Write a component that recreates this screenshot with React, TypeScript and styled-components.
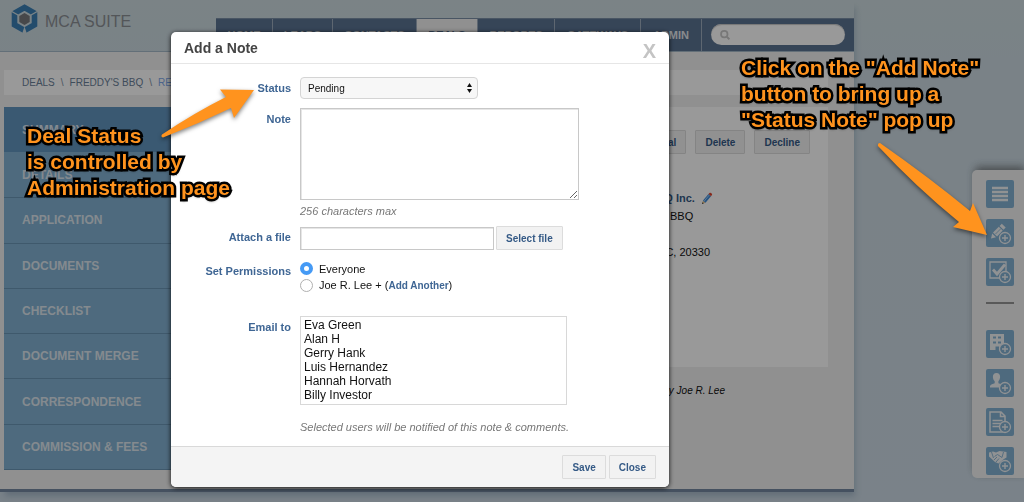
import React from "react";
import styled, { createGlobalStyle } from "styled-components";

const GlobalStyle = createGlobalStyle`
  * { box-sizing: border-box; }
  html { min-height: 100%; }
  body {
    margin: 0;
    min-height: 100vh;
    background: linear-gradient(180deg, #cddbdf 0, #cbd9e1 60px, #cbd9e4 100%);
    font-family: "Liberation Sans", Arial, Helvetica, sans-serif;
    font-size: 11px;
    line-height: 18px;
    color: #111;
    overflow: hidden;
  }
  button, input, select, textarea { font-family: inherit; }
  ul, ol { list-style: none; margin: 0; padding: 0; }
  p, h1, h2 { margin: 0; }
  a { text-decoration: none; }
`;

/* ---------- page behind the dialog ---------- */

const Shell = styled.div`
  margin-right: 170px;
  border-bottom: 3px solid #7488a0;
  box-shadow: 3px 6px 6px -2px rgba(80, 110, 140, 0.3);
`;

const Header = styled.header`
  display: flex;
  align-items: flex-end;
  justify-content: space-between;
  height: 52px;
  border-bottom: 1px solid #a5b9c8;
`;

const Brand = styled.a`
  display: flex;
  align-self: flex-start;
  align-items: flex-end;
  gap: 6px;
  padding: 4px 0 0 10px;
  color: #8b8f94;
  font-size: 16px;
  line-height: 24px;
`;

const Nav = styled.nav`
  display: flex;
  height: 33px;
  background: #5a7392;
  border-top: 1px solid #7b8ea6;
`;

const NavLink = styled.a<{ $width: number; $active?: boolean }>`
  width: ${(p) => p.$width}px;
  text-align: center;
  font-size: 11px;
  font-weight: 700;
  line-height: 32px;
  color: ${(p) => (p.$active ? "#5a7392" : "#e4e8ec")};
  background: ${(p) => (p.$active ? "#f0f0f0" : "transparent")};
  border-right: 1px solid #9dacbd;
`;

const SearchBox = styled.label`
  display: flex;
  align-items: center;
  gap: 6px;
  width: 134px;
  height: 21px;
  margin: 5px 9px;
  padding: 0 9px;
  border-radius: 11px;
  background: #fff;
  box-shadow: inset 0 1px 1px #c5c5c5;
`;

const SearchInput = styled.input`
  min-width: 0;
  width: 100%;
  border: 0;
  outline: 0;
  background: transparent;
  font-size: 11px;
`;

const Main = styled.main`
  padding: 18px 26px 19px 4px;
  background: #f0f0f0;
`;

const Crumbs = styled.nav`
  display: flex;
  gap: 6px;
  padding: 0 18px;
  margin-bottom: 12px;
  background: #fff;
  font-size: 10px;
  line-height: 25px;
  color: #7d8fa3;
`;

const Crumb = styled.a<{ $current?: boolean }>`
  color: ${(p) => (p.$current ? "#7da7e8" : "#6a8098")};
`;

const Columns = styled.div`
  display: flex;
  align-items: flex-start;
`;

const Sidebar = styled.nav`
  display: grid;
  grid-template-rows: 46px;
  grid-auto-rows: 1fr;
  flex: 0 0 180px;
  height: 363px;
  background: #83b1d2;
`;

const SideLink = styled.a<{ $active?: boolean }>`
  display: flex;
  align-items: center;
  padding-left: 18px;
  font-size: 12px;
  font-weight: 700;
  color: #dde6ee;
  background: ${(p) => (p.$active ? "#6294bf" : "transparent")};
  border-bottom: 1px solid ${(p) => (p.$active ? "#83b1d2" : "#6a94b4")};
`;

const Content = styled.div`
  flex: 1;
  min-width: 0;
`;

const DealCard = styled.section`
  height: 260px;
  padding: 23px 18px;
  background: #fff;
`;

const Toolbar = styled.div`
  display: flex;
  justify-content: flex-end;
  gap: 9px;
`;

const Button = styled.button`
  height: 24px;
  padding: 0 9px;
  border: 1px solid #dcdcdc;
  border-radius: 1px;
  background: #f2f2f2;
  color: #355a86;
  font-size: 10px;
  font-weight: 700;
`;

const DealInfo = styled.div`
  display: flex;
  flex-direction: column;
  align-items: flex-start;
  width: 210px;
  margin: 35px 0 0 auto;
`;

const DealName = styled.h1`
  display: flex;
  align-items: center;
  gap: 6px;
  font-size: 11px;
  line-height: 18px;
  color: #355a86;
`;

const InfoLine = styled.p<{ $spaced?: boolean }>`
  margin-top: ${(p) => (p.$spaced ? 18 : 0)}px;
`;

const Credit = styled.p`
  padding: 15px 103px 0 0;
  text-align: right;
  font-size: 10px;
  font-style: italic;
`;

/* ---------- quick actions on the right edge ---------- */

const Rail = styled.aside`
  position: fixed;
  top: 170px;
  right: 0;
  display: flex;
  flex-direction: column;
  gap: 11px;
  padding: 10px 10px 3px 14px;
  height: 308px;
  border-radius: 5px 0 0 5px;
  background: #f2f2f2;
  box-shadow: 2px -4px 8px -1px rgba(60, 60, 60, 0.6);
`;

const RailButton = styled.button`
  width: 28px;
  height: 28px;
  padding: 0;
  border: 0;
  border-radius: 2px;
  background: #83b1d2;
  svg { display: block; }
`;

const RailRule = styled.hr`
  width: 28px;
  height: 2px;
  margin: 5px 0 15px;
  border: 0;
  background: #959595;
`;

/* ---------- dialog ---------- */

const Overlay = styled.div`
  position: fixed;
  inset: 0;
  padding: 32px 355px 0 171px;
  background: rgba(0, 0, 0, 0.4);
`;

const Dialog = styled.section`
  border-radius: 5px;
  background: #fff;
  box-shadow: 0 1px 5px rgba(0, 0, 0, 0.9);
  overflow: hidden;
`;

const DialogHeader = styled.header`
  display: flex;
  align-items: center;
  justify-content: space-between;
  height: 32px;
  padding: 0 13px;
  border-bottom: 1px solid #e6e6e6;
`;

const Title = styled.h2`
  font-size: 14px;
  line-height: 30px;
  color: #444;
`;

const Dismiss = styled.button`
  padding: 6px 0 0;
  border: 0;
  background: none;
  color: #c4c4c4;
  font-size: 20px;
  font-weight: 700;
  line-height: 20px;
`;

const Form = styled.form`
  display: grid;
  grid-template-columns: 120px 1fr;
  column-gap: 9px;
  padding: 13px 0 10px;
`;

const labelText = `
  padding-top: 2px;
  text-align: right;
  font-size: 11px;
  font-weight: 700;
  color: #3f6694;
`;

const Label = styled.label`${labelText}`;
const GroupLabel = styled.span`${labelText}`;

const Field = styled.div<{ $after: number }>`
  margin-bottom: ${(p) => p.$after}px;
`;

const SelectWrap = styled.div`
  position: relative;
  width: 178px;
  svg { position: absolute; right: 5px; top: 6px; pointer-events: none; }
`;

const Select = styled.select`
  display: block;
  width: 100%;
  height: 22px;
  padding: 0 7px;
  appearance: none;
  border: 1px solid #d4d4d4;
  border-radius: 4px;
  background: #f7f7f7;
  color: #111;
  font-size: 10px;
`;

const TextArea = styled.textarea`
  display: block;
  width: 279px;
  height: 92px;
  margin-bottom: 2px;
  border: 1px solid #c8c8c8;
  box-shadow: inset 1px 1px 0 #e6e6e6;
`;

const Hint = styled.p`
  font-size: 11px;
  font-style: italic;
  color: #777;
`;

const FileRow = styled.div`
  display: flex;
  align-items: center;
  gap: 2px;
`;

const TextInput = styled.input`
  width: 194px;
  height: 23px;
  border: 1px solid #c8c8c8;
  box-shadow: inset 1px 1px 0 #e6e6e6;
`;

const RadioRow = styled.div`
  display: flex;
  align-items: center;
  gap: 6px;
  height: 17px;
`;

const Radio = styled.input`
  appearance: none;
  width: 13px;
  height: 13px;
  margin: 0;
  border: 1px solid #b0b0b0;
  border-radius: 50%;
  background: #fff;
  &:checked {
    border: 4px solid #459af5;
  }
`;

const AddLink = styled.a`
  font-size: 10px;
  font-weight: 700;
  color: #3f6694;
`;

const ListBox = styled.select`
  display: block;
  width: 267px;
  height: 89px;
  padding: 1px 0;
  border: 1px solid #d8d8d8;
  border-radius: 0;
  background: #fff;
  color: #111;
  font-size: 12px;
  overflow: hidden;
  outline: 0;
  option {
    min-height: 14px;
    height: 14px;
    padding: 0 3px;
    line-height: 14px;
  }
`;

const DialogFooter = styled.footer`
  display: flex;
  justify-content: flex-end;
  gap: 3px;
  padding: 8px 13px;
  border-top: 1px solid #d9d9d9;
  background: #f4f4f4;
`;

/* ---------- tutorial annotations ---------- */

const Callout = styled.p<{ $x: number; $y: number }>`
  position: absolute;
  left: ${(p) => p.$x}px;
  top: ${(p) => p.$y}px;
  font-size: 21px;
  font-weight: 700;
  line-height: 26px;
  white-space: pre;
  color: #ff931e;
  -webkit-text-stroke: 5px #000;
  paint-order: stroke fill;
  stroke-linejoin: round;
  text-shadow: 0 2px 3px rgba(0, 0, 0, 0.6);
`;

const Arrows = styled.svg`
  position: absolute;
  left: 0;
  top: 0;
  pointer-events: none;
  filter: drop-shadow(0 2px 2px rgba(0, 0, 0, 0.5));
`;

/* ---------- icons ---------- */

const Logo = () => (
  <svg width="29" height="30" viewBox="0 0 29 30" aria-hidden="true">
    <path d="M14.500 3.500 L24.500 9.200 V20.800 L14.500 26.500 L4.500 20.800 V9.200Z" fill="none" stroke="#3b7fb5" strokeWidth="5.600" />
    <path d="M0 6.500 L8 11 M29 6.500 L21 11" stroke="#cddbdf" strokeWidth="1.400" />
    <path d="M12 30 L14.500 22.500 L17 30Z" fill="#cddbdf" />
    <path d="M14.500 9 L19.700 12 V18 L14.500 21 L9.300 18 V12Z" fill="#77797c" />
  </svg>
);

const PencilColor = () => (
  <svg width="12" height="13" viewBox="0 0 12 13" aria-hidden="true">
    <path d="M1 12 L2 8.500 L4.500 10.800Z" fill="#e8c48c" />
    <path d="M1 12 L1.500 10.300 L2.700 11.500Z" fill="#333" />
    <path d="M2 8.500 L7.500 2 L10 4.300 L4.500 10.800Z" fill="#3e8ad8" />
    <path d="M3 9.300 L8.400 2.900" stroke="#9cc9f5" />
    <path d="M7.500 2 L8.800.8 Q10.500.3 11.200 2.400 L10 4.300Z" fill="#e0452f" />
  </svg>
);

const Plus = () => (
  <g>
    <circle cx="19" cy="19" r="5.500" fill="#83b1d2" stroke="#f0f3f6" strokeWidth="1.300" />
    <path d="M19 16v6M16 19h6" stroke="#f0f3f6" strokeWidth="1.400" />
  </g>
);

const glyphs: Record<string, React.ReactNode> = {
  Menu: <path d="M6 8h16M6 12h16M6 16h16M6 20h16" stroke="#f0f3f6" strokeWidth="2.600" />,
  "Add note": (
    <g>
      <path d="M5 19.500 L6.200 14.500 L10 18.300Z M7 13.500 L12.800 7.800 L16.700 11.600 L11 17.400Z M13.600 7 L15.800 4.800 L19.700 8.600 L17.500 10.800Z" fill="#f0f3f6" />
      <path d="M9.500 15 L15 9.500" stroke="#83b1d2" strokeWidth=".8" />
      <Plus />
    </g>
  ),
  "Add task": (
    <g>
      <path d="M4 4h16v16H4z" fill="none" stroke="#f0f3f6" strokeWidth="1.300" />
      <path d="M7 11.500l4 4.500 8-9.500" fill="none" stroke="#f0f3f6" strokeWidth="2.800" />
      <Plus />
    </g>
  ),
  "Add company": (
    <g>
      <path d="M4 4h14v16H13v-3.500H9.500V20H4z" fill="#f0f3f6" />
      <path d="M7 7.500h3M12 7.500h3M7 12.500h3M12 12.500h3" stroke="#83b1d2" strokeWidth="2" />
      <Plus />
    </g>
  ),
  "Add contact": (
    <g>
      <path d="M10.500 4c2.600 0 3.800 1.800 3.600 4.200-.2 2-1 3.200-1.700 4v2c2 .8 4 1.200 5 2.800V18.500H4v-1.500c.6-1.600 3-2 4.700-2.800v-2c-.9-.8-1.600-2-1.800-4C6.700 5.800 8 4 10.500 4z" fill="#f0f3f6" />
      <Plus />
    </g>
  ),
  "Add document": (
    <g>
      <path d="M4 4h11l4 4v16H4z M14.500 4v4.500H19" fill="none" stroke="#f0f3f6" strokeWidth="1.500" />
      <path d="M6.500 12.500h10M6.500 15.500h9M6.500 18.500h8" stroke="#f0f3f6" strokeWidth="1.300" />
      <Plus />
    </g>
  ),
  "Add deal": (
    <g>
      <path d="M3 5.500 L7 4.500 L10 5.500 L13.500 4 L20.500 5 V10.500 L18 12 L12.500 16.500 L9 15 L3 9.500Z" fill="#f0f3f6" />
      <path d="M5.500 5l2 6M17.500 5l-1.500 5.500-4.500-3-3 2M8 13l3-3M10 15l3-3.500" fill="none" stroke="#83b1d2" strokeWidth=".9" />
      <Plus />
    </g>
  ),
};

const RailAction = ({ name }: { name: string }) => (
  <RailButton type="button" aria-label={name}>
    <svg width="28" height="28" viewBox="0 0 28 28">{glyphs[name]}</svg>
  </RailButton>
);

const navItems: [string, number][] = [
  ["HOME", 57],
  ["LEADS", 60],
  ["CONTACTS", 84],
  ["DEALS", 61],
  ["REPORTS", 77],
  ["GATEWAYS", 86],
  ["ADMIN", 61],
];

const sideItems = [
  "SUMMARY",
  "DETAILS",
  "APPLICATION",
  "DOCUMENTS",
  "CHECKLIST",
  "DOCUMENT MERGE",
  "CORRESPONDENCE",
  "COMMISSION & FEES",
];

const people = ["Eva Green", "Alan H", "Gerry Hank", "Luis Hernandez", "Hannah Horvath", "Billy Investor"];

export default function App() {
  return (
    <>
      <GlobalStyle />
      <Shell>
        <Header>
          <Brand href="#"><Logo />MCA SUITE</Brand>
          <Nav>
            {navItems.map(([name, width]) => (
              <NavLink key={name} href="#" $width={width} $active={name === "DEALS"}>{name}</NavLink>
            ))}
            <SearchBox>
              <svg width="12" height="12" viewBox="0 0 12 12" aria-hidden="true">
                <circle cx="5" cy="5" r="3.800" fill="none" stroke="#c8c8c8" strokeWidth="2" />
                <path d="M8 8l3 3" stroke="#c8c8c8" strokeWidth="2.200" />
              </svg>
              <SearchInput type="search" aria-label="Search" />
            </SearchBox>
          </Nav>
        </Header>
        <Main>
          <Crumbs>
            <Crumb href="#">DEALS</Crumb>\<Crumb href="#">FREDDY'S BBQ</Crumb>\
            <Crumb href="#" $current>RENEWAL</Crumb>
          </Crumbs>
          <Columns>
            <Sidebar>
              {sideItems.map((name, i) => (
                <SideLink key={name} href="#" $active={i === 0}>{name}</SideLink>
              ))}
            </Sidebar>
            <Content>
              <DealCard>
                <Toolbar>
                  <Button type="button">Approval</Button>
                  <Button type="button">Delete</Button>
                  <Button type="button">Decline</Button>
                </Toolbar>
                <DealInfo>
                  <DealName>Freddy's BBQ Inc. <PencilColor /></DealName>
                  <InfoLine>DBA Freddy's BBQ</InfoLine>
                  <InfoLine $spaced>Wilmington NC, 20330</InfoLine>
                </DealInfo>
              </DealCard>
              <Credit>by Joe R. Lee</Credit>
            </Content>
          </Columns>
        </Main>
      </Shell>

      <Rail>
        <RailAction name="Menu" />
        <RailAction name="Add note" />
        <RailAction name="Add task" />
        <RailRule />
        <RailAction name="Add company" />
        <RailAction name="Add contact" />
        <RailAction name="Add document" />
        <RailAction name="Add deal" />
      </Rail>

      <Overlay>
        <Dialog role="dialog" aria-labelledby="dialog-title">
          <DialogHeader>
            <Title id="dialog-title">Add a Note</Title>
            <Dismiss type="button" aria-label="Dismiss">X</Dismiss>
          </DialogHeader>
          <Form id="note-form">
            <Label htmlFor="status">Status</Label>
            <Field $after={9}>
              <SelectWrap>
                <Select id="status" defaultValue="Pending">
                  <option>Pending</option>
                </Select>
                <svg width="7" height="10" viewBox="0 0 7 10" aria-hidden="true">
                  <path d="M3.500 0L6 4H1zM3.500 10L6 6H1z" fill="#111" />
                </svg>
              </SelectWrap>
            </Field>

            <Label htmlFor="note">Note</Label>
            <Field $after={6}>
              <TextArea id="note" />
              <Hint>256 characters max</Hint>
            </Field>

            <Label htmlFor="file">Attach a file</Label>
            <Field $after={10}>
              <FileRow>
                <TextInput id="file" type="text" />
                <Button type="button">Select file</Button>
              </FileRow>
            </Field>

            <GroupLabel id="permissions">Set Permissions</GroupLabel>
            <Field $after={22} role="radiogroup" aria-labelledby="permissions">
              <RadioRow>
                <Radio type="radio" name="who" id="everyone" defaultChecked />
                <label htmlFor="everyone">Everyone</label>
              </RadioRow>
              <RadioRow>
                <Radio type="radio" name="who" id="joe" />
                <span><label htmlFor="joe">Joe R. Lee</label> + (<AddLink href="#">Add Another</AddLink>)</span>
              </RadioRow>
            </Field>

            <Label htmlFor="email">Email to</Label>
            <Field $after={13}>
              <ListBox id="email" multiple size={6}>
                {people.map((name) => <option key={name}>{name}</option>)}
              </ListBox>
            </Field>
            <span />
            <Field $after={0}>
              <Hint>Selected users will be notified of this note &amp; comments.</Hint>
            </Field>
          </Form>
          <DialogFooter>
            <Button type="submit" form="note-form">Save</Button>
            <Button type="button">Close</Button>
          </DialogFooter>
        </Dialog>
      </Overlay>

      <Arrows width="1024" height="502" viewBox="0 0 1024 502" aria-hidden="true">
        <path d="M162 134.500 Q194 113 226 97 L220 89.500 L254 90 L234 118 L231 108 Q198 124 163 137.500 Q160.500 137 162 134.500Z" fill="#ff931e" />
        <path d="M880 143 Q930 178 970 211 L973 203 L987 235 L953 227 L959 222 Q915 186 878 146 Q877.500 143 880 143Z" fill="#ff931e" />
      </Arrows>
      <Callout $x={27} $y={123}>{"Deal Status\nis controlled by\nAdministration page"}</Callout>
      <Callout $x={741} $y={55}>{'Click on the "Add Note"\nbutton to bring up a\n"Status Note" pop up'}</Callout>
    </>
  );
}
